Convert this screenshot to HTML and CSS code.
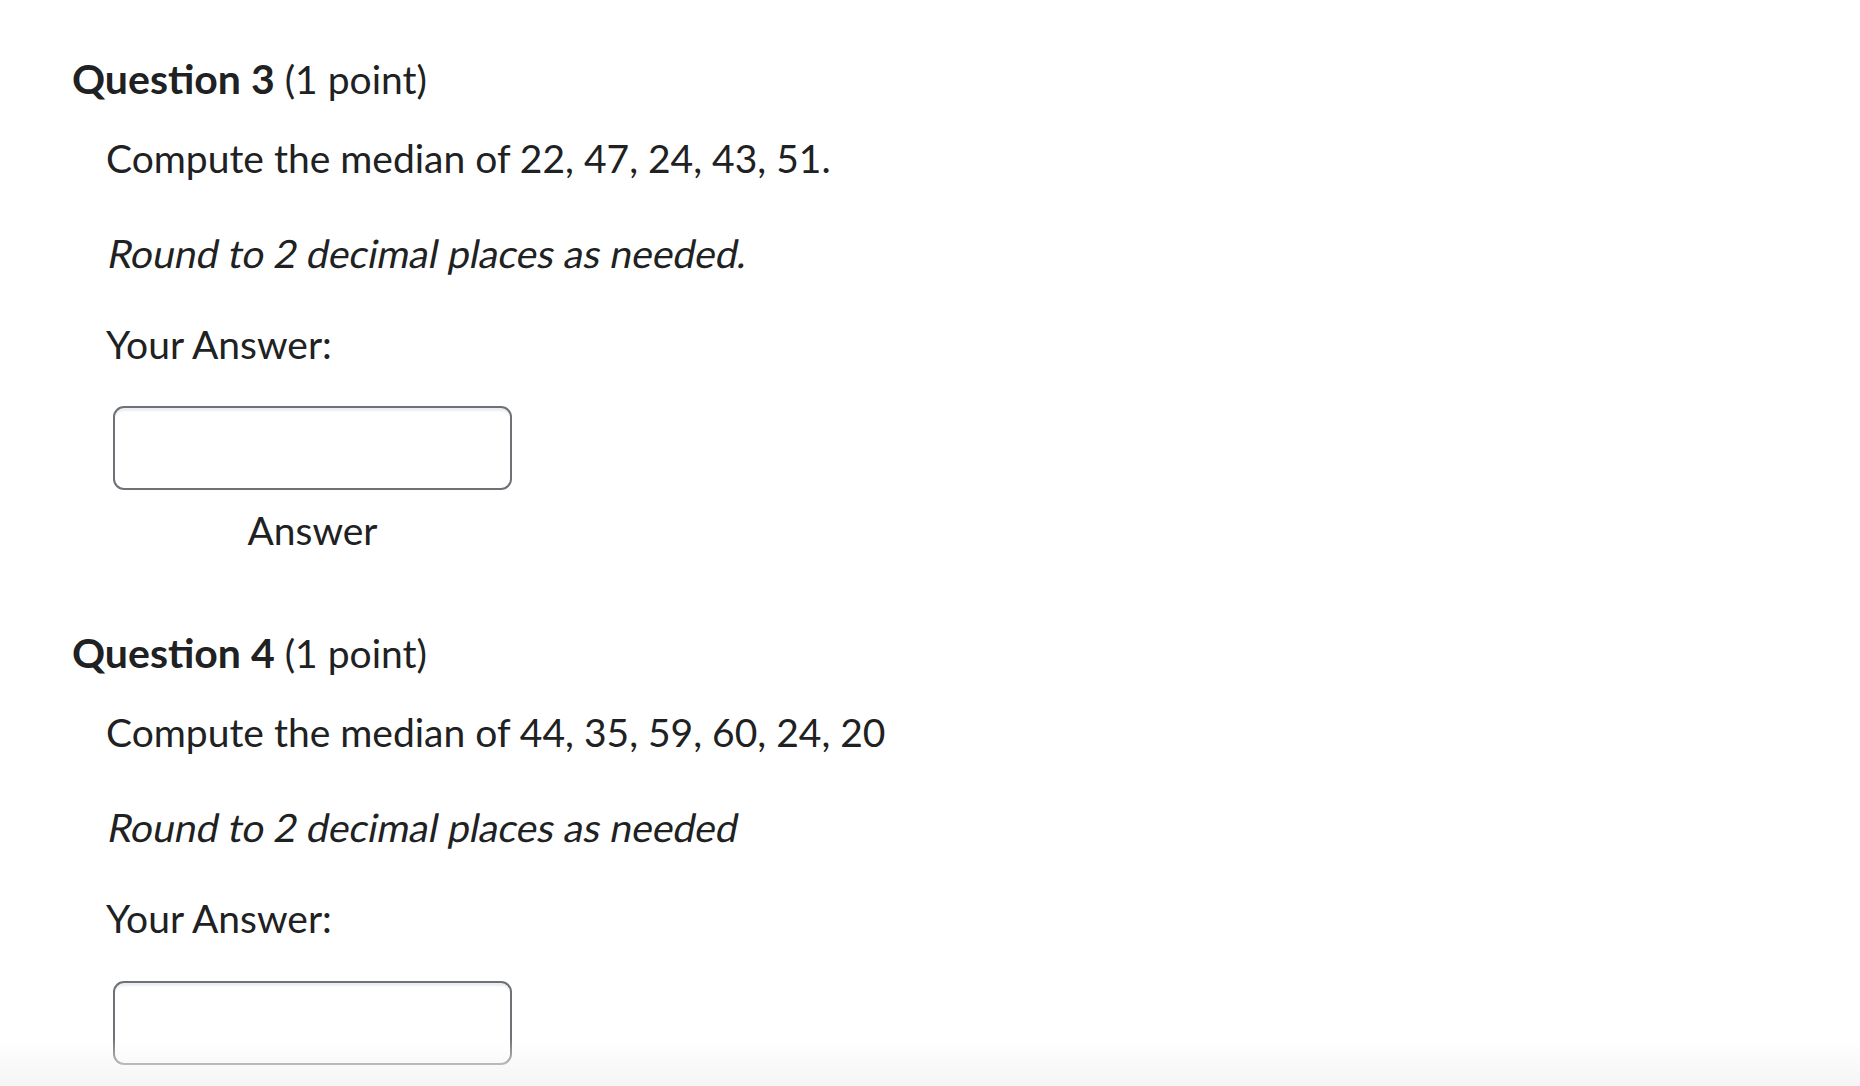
FILE: index.html
```html
<!DOCTYPE html>
<html lang="en">
<head>
<meta charset="utf-8">
<title>Quiz</title>
<link rel="stylesheet" href="styles.css">
</head>
<body>
<main class="quiz">
  <section class="question">
    <h2 class="q-title"><strong>Question 3</strong> (1 point)</h2>
    <div class="q-body">
      <p class="q-text">Compute the median of 22, 47, 24, 43, 51.</p>
      <p class="q-note"><span class="oblique">Round to 2 decimal places as needed.</span></p>
      <p class="q-label">Your Answer:</p>
      <div class="answer">
        <input class="answer-input" type="text" aria-label="Answer">
        <div class="answer-caption">Answer</div>
      </div>
    </div>
  </section>
  <section class="question">
    <h2 class="q-title"><strong>Question 4</strong> (1 point)</h2>
    <div class="q-body">
      <p class="q-text">Compute the median of 44, 35, 59, 60, 24, 20</p>
      <p class="q-note"><span class="oblique">Round to 2 decimal places as needed</span></p>
      <p class="q-label">Your Answer:</p>
      <div class="answer">
        <input class="answer-input" type="text" aria-label="Answer">
        <div class="answer-caption">Answer</div>
      </div>
    </div>
  </section>
</main>
<div class="bottom-fade"></div>
</body>
</html>
```
FILE: styles.css
```css
html, body {
  margin: 0;
  padding: 0;
  background: #ffffff;
  overflow: hidden;
  height: 100%;
}

body {
  font-family: Lato, "Open Sans", "Liberation Sans", sans-serif;
  color: #202122;
}

.quiz {
  display: flex;
  flex-direction: column;
  gap: 75px;
  padding: 55px 0 0 72px;
}

.question {
  display: flex;
  flex-direction: column;
}

.q-title {
  margin: 0;
  font-size: 39px;
  line-height: 47px;
  font-weight: 400;
}

.q-title strong {
  font-size: 41px;
  font-weight: 700;
}

.q-body {
  display: flex;
  flex-direction: column;
  margin-left: 34px;
  padding-top: 32px;
}

.q-text,
.q-note,
.q-label {
  margin: 0;
  font-size: 39px;
  line-height: 1.2;
}

.q-note {
  margin-top: 48px;
}

.oblique {
  display: inline-block;
  font-style: normal;
  transform: skewX(-11deg);
  transform-origin: 0 80%;
}

.q-label {
  margin-top: 44px;
}

.answer {
  display: flex;
  flex-direction: column;
  align-items: center;
  width: 399px;
  margin-left: 7px;
  margin-top: 39px;
}

.answer-input {
  box-sizing: border-box;
  width: 399px;
  height: 84px;
  margin: 0;
  border: 2px solid #6e7276;
  border-radius: 11px;
  background: #ffffff;
  box-shadow: inset 0 5px 2px -2px #eceef1;
  font: inherit;
  font-size: 35px;
  outline: none;
}

.answer-caption {
  margin-top: 17px;
  font-size: 39px;
  line-height: 1.2;
}

.bottom-fade {
  position: fixed;
  left: 0;
  right: 0;
  bottom: 0;
  height: 48px;
  background: linear-gradient(to bottom, rgba(246, 246, 246, 0), #f5f5f5);
  pointer-events: none;
}
```
